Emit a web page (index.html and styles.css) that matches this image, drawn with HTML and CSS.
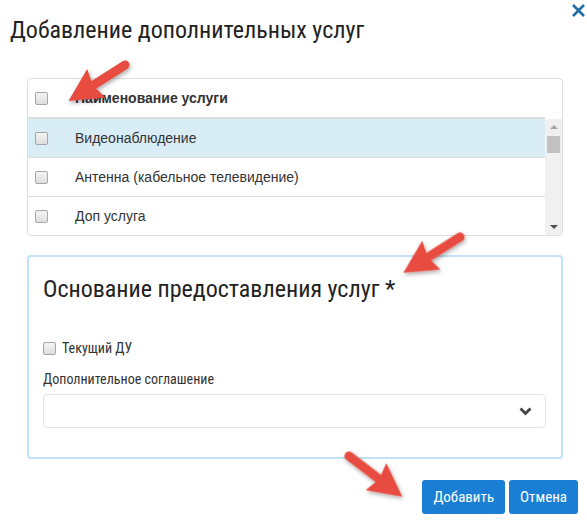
FILE: index.html
```html
<!DOCTYPE html>
<html lang="ru">
<head>
    <meta charset="UTF-8">
    <meta name="viewport" content="width=device-width, initial-scale=1.0">
    <title>Добавление дополнительных услуг</title>
    <link rel="stylesheet" href="styles.css">
</head>
<body>
    <div class="modal">
        <div class="modal-header">
            <h1>Добавление дополнительных услуг</h1>
            <button class="close" title="Закрыть">
                <svg width="15" height="15" viewBox="0 0 15 15"><path d="M2 2 L13 13 M13 2 L2 13" stroke="#1f6ea8" stroke-width="2.6" fill="none"/></svg>
            </button>
        </div>

        <div class="modal-body">
            <!-- список услуг с прокруткой -->
            <div class="services">
                <div class="services-head">
                    <input type="checkbox" class="check">
                    <span>Наименование услуги</span>
                </div>
                <div class="services-body">
                    <div class="rows">
                        <div class="row active"><input type="checkbox" class="check"><span>Видеонаблюдение</span></div>
                        <div class="row"><input type="checkbox" class="check"><span>Антенна (кабельное телевидение)</span></div>
                        <div class="row last"><input type="checkbox" class="check"><span>Доп услуга</span></div>
                    </div>
                    <div class="scrollbar">
                        <span class="sb-up"></span>
                        <span class="sb-thumb"></span>
                        <span class="sb-down"></span>
                    </div>
                </div>
            </div>

            <div class="basis">
                <h2>Основание предоставления услуг *</h2>
                <label class="check-label"><input type="checkbox" class="check"> Текущий ДУ</label>
                <div class="field-label">Дополнительное соглашение</div>
                <div class="select">
                    <svg width="13" height="9" viewBox="0 0 13 9"><path d="M1.5 1.5 L6.5 6.5 L11.5 1.5" stroke="#444" stroke-width="2.8" fill="none"/></svg>
                </div>
            </div>
        </div>

        <div class="modal-footer">
            <button class="btn">Добавить</button>
            <button class="btn">Отмена</button>
        </div>

        <!-- стрелки-пометки поверх формы -->
        <svg class="marks" width="587" height="532" viewBox="0 0 587 532">
            <defs>
                <filter id="shadow" x="-30%" y="-30%" width="160%" height="160%">
                    <feDropShadow dx="1" dy="2" stdDeviation="2" flood-color="#000" flood-opacity="0.35"/>
                </filter>
                <g id="arrow">
                    <line x1="0" y1="0" x2="40" y2="0" stroke="#e84b40" stroke-width="9" stroke-linecap="round"/>
                    <polygon points="67,0 34,-17 38,0 34,17" fill="#e84b40"/>
                </g>
            </defs>
            <g filter="url(#shadow)">
                <use href="#arrow" transform="translate(125 65) rotate(147.5)"/>
                <use href="#arrow" transform="translate(460 237) rotate(147.7)"/>
                <use href="#arrow" transform="translate(349 456) rotate(37.4)"/>
            </g>
        </svg>
    </div>
</body>
</html>
```

FILE: styles.css
```css
body {
    margin: 0;
    font-family: "Liberation Sans", Arial, sans-serif;
    font-size: 14px;
    color: #333;
    background: #fff;
}
.modal {
    position: relative;
    width: 587px;
    height: 532px;
}
.modal-header {
    height: 78px;
    box-sizing: border-box;
    padding: 15px 0 0 10px;
}
h1, h2 {
    font-family: "Roboto Condensed", "Liberation Sans Narrow", "DejaVu Sans Condensed", sans-serif;
    font-weight: normal;
    color: #222;
    margin: 0;
}
h1 {
    font-size: 24px;
    line-height: 30px;
}
.close {
    position: absolute;
    top: 3px;
    right: 1px;
    padding: 0;
    border: none;
    background: none;
    line-height: 0;
    cursor: pointer;
}
.modal-body {
    width: 536px;
    margin-left: 27px;
}

/* чекбокс */
.check {
    appearance: none;
    -webkit-appearance: none;
    width: 13px;
    height: 13px;
    margin: 0;
    border: 1px solid #a6a6a6;
    border-radius: 2px;
    background: linear-gradient(#f4f4f4, #dedede);
    box-sizing: border-box;
    flex: none;
}

/* таблица услуг */
.services {
    border: 1px solid #ddd;
    border-radius: 4px;
}
.services-head {
    display: flex;
    align-items: center;
    height: 38px;
    margin-right: 17px;
    padding-left: 7px;
    border-bottom: 2px solid #ddd;
    font-weight: bold;
}
.services-head span,
.row span {
    margin-left: 27px;
}
.services-body {
    display: flex;
}
.rows {
    flex: 1;
}
.row {
    display: flex;
    align-items: center;
    height: 38px;
    padding-left: 7px;
    border-bottom: 1px solid #ddd;
}
.row.active {
    background: #d9edf7;
}
.row.last {
    border-bottom: none;
}
.scrollbar {
    width: 17px;
    display: flex;
    flex-direction: column;
    align-items: center;
    background: #f0f0f0;
    border-bottom-right-radius: 4px;
}
.sb-up {
    margin-top: 6px;
    border: 4px solid transparent;
    border-top: none;
    border-bottom: 4px solid #a3a3a3;
}
.sb-thumb {
    width: 13px;
    height: 17px;
    margin-top: 7px;
    background: #c1c1c1;
}
.sb-down {
    margin-top: auto;
    margin-bottom: 6px;
    border: 4px solid transparent;
    border-bottom: none;
    border-top: 4px solid #505050;
}

/* блок основания */
.basis {
    margin-top: 19px;
    height: 204px;
    box-sizing: border-box;
    padding: 17px 15px 0 14px;
    border: 2px solid #c3e2f7;
    border-radius: 4px;
}
h2 {
    font-size: 24px;
    line-height: 30px;
}
.check-label {
    display: flex;
    align-items: center;
    gap: 6px;
    margin-top: 36px;
    font-family: "Roboto Condensed", "Liberation Sans Narrow", "DejaVu Sans Condensed", sans-serif;
    font-size: 14px;
}
.field-label {
    margin-top: 15px;
    font-family: "Roboto Condensed", "Liberation Sans Narrow", "DejaVu Sans Condensed", sans-serif;
    font-size: 14px;
}
.select {
    display: flex;
    align-items: center;
    justify-content: flex-end;
    height: 32px;
    margin-top: 7px;
    padding-right: 13px;
    border: 1px solid #e3e3e3;
    border-radius: 4px;
}

.modal-footer {
    display: flex;
    justify-content: flex-end;
    gap: 4px;
    margin-top: 21px;
    padding-right: 9px;
}
.btn {
    height: 34px;
    padding: 0 11px;
    border: none;
    border-radius: 3px;
    background: #1a7fd4;
    color: #fff;
    font-family: "Roboto Condensed", "Liberation Sans Narrow", "DejaVu Sans Condensed", sans-serif;
    font-size: 15px;
    cursor: pointer;
}

.marks {
    position: absolute;
    top: 0;
    left: 0;
    pointer-events: none;
}
```
